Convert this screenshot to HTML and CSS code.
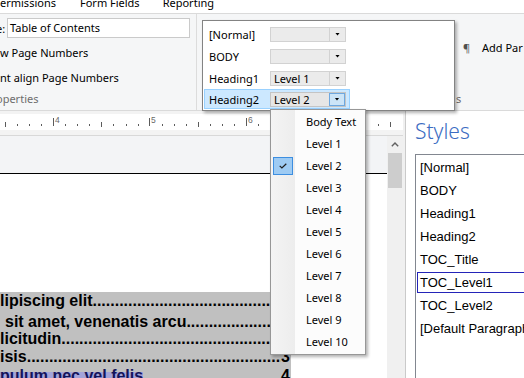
FILE: index.html
```html
<!DOCTYPE html>
<html>
<head>
<meta charset="utf-8">
<link rel="stylesheet" href="styles.css">
</head>
<body>
<div class="app">
  <div class="menubar">
    <span class="mi">ermissions</span>
    <span class="mi">Form Fields</span>
    <span class="mi mi-last">Reporting</span>
  </div>

  <div class="ribbon">
    <div class="grp-toc">
      <div class="namerow"><span class="lbl">e:</span><div class="textbox">Table of Contents</div></div>
      <div class="opt opt1">w Page Numbers</div>
      <div class="opt opt2">nt align Page Numbers</div>
      <div class="grplabel cut">operties</div>
    </div>
    <div class="grp-rest">
      <div class="parrow"><span class="pilcrow">¶</span><span>Add Par</span></div>
      <div class="grplabel">s</div>
    </div>
  </div>

  <div class="work">
    <div class="editor">
      <div class="ruler">
        <div class="ruler-band">
          <svg class="ruler-svg" width="403" height="16" viewBox="0 0 403 16">
            <g fill="#5b5b5b">
              <rect x="5" y="8" width="1" height="5"/>
              <rect x="17" y="10" width="1" height="2"/>
              <rect x="29" y="10" width="1" height="2"/>
              <rect x="41" y="10" width="1" height="2"/>
              <rect x="53" y="4" width="1" height="8"/>
              <rect x="65" y="10" width="1" height="2"/>
              <rect x="77" y="10" width="1" height="2"/>
              <rect x="89" y="10" width="1" height="2"/>
              <rect x="101" y="8" width="1" height="5"/>
              <rect x="113" y="10" width="1" height="2"/>
              <rect x="126" y="10" width="1" height="2"/>
              <rect x="138" y="10" width="1" height="2"/>
              <rect x="149" y="4" width="1" height="8"/>
              <rect x="162" y="10" width="1" height="2"/>
              <rect x="174" y="10" width="1" height="2"/>
              <rect x="186" y="10" width="1" height="2"/>
              <rect x="198" y="8" width="1" height="5"/>
              <rect x="210" y="10" width="1" height="2"/>
              <rect x="222" y="10" width="1" height="2"/>
              <rect x="234" y="10" width="1" height="2"/>
              <rect x="246" y="4" width="1" height="8"/>
              <rect x="258" y="10" width="1" height="2"/>
              <rect x="378" y="10" width="1" height="2"/>
              <rect x="390" y="8" width="1" height="5"/>
            </g>
            <g class="rnum" fill="#6a6a6a">
              <text x="55" y="8.5">4</text>
              <text x="151" y="8.5">5</text>
              <text x="248" y="8.5">6</text>
            </g>
          </svg>
        </div>
      </div>
      <div class="docrow">
        <div class="docview">
          <div class="page">
            <div class="toc">
              <div class="tr r1 under"><span class="t">lipiscing elit</span><span class="lead">....................................................................</span></div>
              <div class="tr r2 under"><span class="t">sit amet, venenatis arcu</span><span class="lead">....................................................................</span></div>
              <div class="tr r3 under"><span class="t">licitudin</span><span class="lead">....................................................................</span></div>
              <div class="tr r4"><span class="t">isis</span><span class="lead">....................................................................</span><span class="pg">3</span></div>
              <div class="tr r5"><span class="t hl">pulum nec vel felis</span><span class="lead"></span><span class="pg">4</span></div>
            </div>
          </div>
        </div>
        <div class="vscroll">
          <div class="sbtn">
            <svg width="8" height="5" viewBox="0 0 8 5"><polyline points="0.8,4.2 4,1 7.2,4.2" fill="none" stroke="#606060" stroke-width="1.4"/></svg>
          </div>
          <div class="thumb"></div>
        </div>
      </div>
    </div>
    <div class="splitter"></div>
    <div class="styles">
      <div class="styles-title">Styles</div>
      <div class="listbox">
        <div class="li">[Normal]</div>
        <div class="li">BODY</div>
        <div class="li">Heading1</div>
        <div class="li">Heading2</div>
        <div class="li">TOC_Title</div>
        <div class="li sel">TOC_Level1</div>
        <div class="li">TOC_Level2</div>
        <div class="li">[Default Paragraph Font]</div>
      </div>
    </div>
  </div>

  <div class="popup">
    <div class="prow"><span class="pl">[Normal]</span><div class="combo"><span class="cv"></span><span class="ca"><i class="tri"></i></span></div></div>
    <div class="prow"><span class="pl">BODY</span><div class="combo"><span class="cv"></span><span class="ca"><i class="tri"></i></span></div></div>
    <div class="prow"><span class="pl">Heading1</span><div class="combo"><span class="cv">Level 1</span><span class="ca"><i class="tri"></i></span></div></div>
    <div class="prow hi"><span class="pl">Heading2</span><div class="combo act"><span class="cv">Level 2</span><span class="ca"><i class="tri"></i></span></div></div>
  </div>

  <div class="menu">
    <div class="mitem"><span class="gut"></span><span class="mt">Body Text</span></div>
    <div class="mitem"><span class="gut"></span><span class="mt">Level 1</span></div>
    <div class="mitem"><span class="gut"><span class="chk"><svg width="8" height="6" viewBox="0 0 8 6"><polyline points="0.7,2.8 2.9,5 7.3,0.7" fill="none" stroke="#1e1e1e" stroke-width="1.2"/></svg></span></span><span class="mt">Level 2</span></div>
    <div class="mitem"><span class="gut"></span><span class="mt">Level 3</span></div>
    <div class="mitem"><span class="gut"></span><span class="mt">Level 4</span></div>
    <div class="mitem"><span class="gut"></span><span class="mt">Level 5</span></div>
    <div class="mitem"><span class="gut"></span><span class="mt">Level 6</span></div>
    <div class="mitem"><span class="gut"></span><span class="mt">Level 7</span></div>
    <div class="mitem"><span class="gut"></span><span class="mt">Level 8</span></div>
    <div class="mitem"><span class="gut"></span><span class="mt">Level 9</span></div>
    <div class="mitem"><span class="gut"></span><span class="mt">Level 10</span></div>
  </div>
</div>
</body>
</html>
```

FILE: styles.css
```css
* { box-sizing: border-box; margin: 0; padding: 0; }
html, body { width: 524px; height: 378px; overflow: hidden; }
body {
  font-family: "Noto Sans", "Open Sans", "DejaVu Sans", sans-serif;
  font-size: 11px;
  color: #000;
  background: #fff;
}
.app {
  position: relative;
  width: 524px;
  height: 378px;
  overflow: hidden;
  display: flex;
  flex-direction: column;
}

/* menu bar */
.menubar {
  flex: none;
  height: 14px;
  background: #fff;
  border-bottom: 1px solid #dadada;
  display: flex;
  overflow: hidden;
}
.mi { line-height: 13px; margin-top: -4px; white-space: nowrap; }
.mi + .mi { margin-left: 24px; }
.mi-last { margin-left: 23px !important; }

/* ribbon */
.ribbon {
  flex: none;
  height: 97px;
  background: #f5f6f7;
  border-bottom: 1px solid #dadada;
  display: flex;
}
.grp-toc {
  width: 197px;
  border-right: 1px solid #dcdcdc;
  padding-top: 4px;
}
.namerow { display: flex; align-items: center; height: 20px; }
.lbl { width: 7px; overflow: hidden; white-space: nowrap; text-indent: -4px; }
.textbox {
  width: 183px;
  height: 20px;
  background: #fff;
  border: 1px solid #cacaca;
  padding-left: 2px;
  line-height: 18px;
  white-space: nowrap;
}
.opt { line-height: 16px; white-space: nowrap; }
.opt1 { margin-top: 7px; }
.opt2 { margin-top: 9px; }
.grplabel { line-height: 16px; color: #6d6d6d; white-space: nowrap; }
.grp-toc .grplabel { margin-top: 5px; }
.cut { text-indent: -4px; overflow: hidden; }
.grp-rest {
  flex: 1;
  display: flex;
  flex-direction: column;
  padding-left: 259px;
  white-space: nowrap;
}
.parrow { margin-top: 26px; margin-left: 7px; line-height: 16px; height: 16px; }
.pilcrow { display: inline-block; width: 19px; color: #505050; }
.grp-rest .grplabel { margin-top: 35px; }

/* work area */
.work { flex: 1; display: flex; min-height: 0; }
.editor { width: 403px; flex: none; display: flex; flex-direction: column; }
.ruler {
  flex: none;
  height: 25px;
  background: #f3f3f3;
  border-bottom: 1px solid #d8d8d8;
  padding-top: 3px;
}
.ruler-band { height: 16px; background: #fff; }
.ruler-svg { display: block; }
.rnum { font-family: "Liberation Sans", Arial, sans-serif; font-size: 8.5px; }

.docrow { flex: 1; display: flex; min-height: 0; }
.docview {
  width: 387px;
  flex: none;
  background: #f3f4f6;
  padding-top: 37px;
  overflow: hidden;
}
.page {
  background: #fff;
  border-top: 1px solid #000;
  height: 320px;
  padding-top: 118px;
}
.toc {
  width: 291px;
  background: #c0c0c0;
  font-family: "Liberation Sans", Arial, sans-serif;
  font-weight: bold;
  font-size: 16px;
  padding: 1px 1px 0 0;
  height: 100px;
}
.tr { display: flex; height: 16px; line-height: 16px; white-space: nowrap; }
.tr.under { margin-right: 20px; }
.tr .t { flex: none; }
.tr .lead { flex: 1; min-width: 0; overflow: hidden; }
.tr .pg { flex: none; }
.r2 { margin-top: 5px; padding-left: 5px; }
.r3 { margin-top: 1px; }
.r4 { margin-top: 2px; }
.r5 { margin-top: 3px; }
.hl { background: linear-gradient(to bottom, transparent 4px, #a3a3d9 4px); color: #14145a; }

.vscroll {
  width: 16px;
  flex: none;
  background: #f0f0f0;
  display: flex;
  flex-direction: column;
  align-items: center;
}
.sbtn { width: 16px; height: 17px; display: flex; align-items: center; justify-content: center; }
.sbtn svg { display: block; }
.thumb { width: 14px; height: 35px; background: #cdcdcd; }

.splitter { width: 3px; flex: none; background: #f0f0f0; border-right: 1px solid #cacaca; }

.styles {
  flex: 1;
  background: #fff;
  padding: 8px 0 0 9px;
  overflow: hidden;
}
.styles-title {
  font-size: 21px;
  line-height: 24px;
  height: 24px;
  font-weight: 300;
  color: #3b6cc2;
  margin-bottom: 11px;
  white-space: nowrap;
}
.listbox {
  width: 135px;
  height: 240px;
  border: 1px solid #828790;
  padding: 2px 0 0 1px;
  display: flex;
  flex-direction: column;
  gap: 2px;
}
.li {
  flex: none;
  height: 21px;
  line-height: 19px;
  border: 1px solid transparent;
  padding-left: 2px;
  font-family: "Liberation Sans", Arial, sans-serif;
  font-size: 13px;
  white-space: nowrap;
  overflow: hidden;
}
.li.sel { border-color: #2424b8; }

/* floating panel with outline level combos */
.popup {
  position: absolute;
  left: 202px;
  top: 20px;
  width: 253px;
  height: 91px;
  background: #fff;
  border: 1px solid #838383;
  box-shadow: 2px 2px 3px rgba(0, 0, 0, 0.3);
  padding: 2px 0 0 1px;
}
.prow { display: flex; align-items: center; height: 22px; width: 146px; }
.pl { width: 66px; flex: none; padding-left: 5px; white-space: nowrap; }
.prow.hi { height: 20px; background: #cce8ff; border: 1px solid #99d1ff; }
.prow.hi .pl { width: 65px; padding-left: 4px; }
.combo {
  width: 76px;
  height: 15px;
  flex: none;
  border: 1px solid #d2d2d2;
  background: #ebebeb;
  display: flex;
}
.cv { flex: 1; padding-left: 3px; line-height: 13px; white-space: nowrap; }
.ca {
  width: 16px;
  flex: none;
  border-left: 1px solid #d2d2d2;
  display: flex;
  align-items: center;
  justify-content: center;
}
.tri {
  display: block;
  width: 5px;
  height: 3px;
  background: #000;
  clip-path: polygon(0 0, 100% 0, 50% 100%);
}
.combo.act { border-color: #c4c4c4; background: #e6e6e6; }
.combo.act .ca { background: #cce4f7; border: 1px solid #6ea8e0; }

/* dropdown list */
.menu {
  position: absolute;
  left: 270px;
  top: 109px;
  width: 96px;
  height: 246px;
  border: 1px solid #979797;
  background: linear-gradient(90deg, #f4f4f4, #ededed) 0 0 / 24px 100% no-repeat, #fcfcfc;
  box-shadow: 2px 2px 3px rgba(0, 0, 0, 0.3);
  padding-top: 1px;
}
.mitem { display: flex; height: 22px; line-height: 22px; white-space: nowrap; }
.gut { width: 24px; flex: none; padding: 2px 0 0 2px; }
.mt { margin-left: 11px; }
.chk {
  display: flex;
  width: 20px;
  height: 18px;
  background: #9ecbf3;
  border: 1px solid #3d8ee0;
  align-items: center;
  justify-content: center;
}
.chk svg { display: block; }
```
